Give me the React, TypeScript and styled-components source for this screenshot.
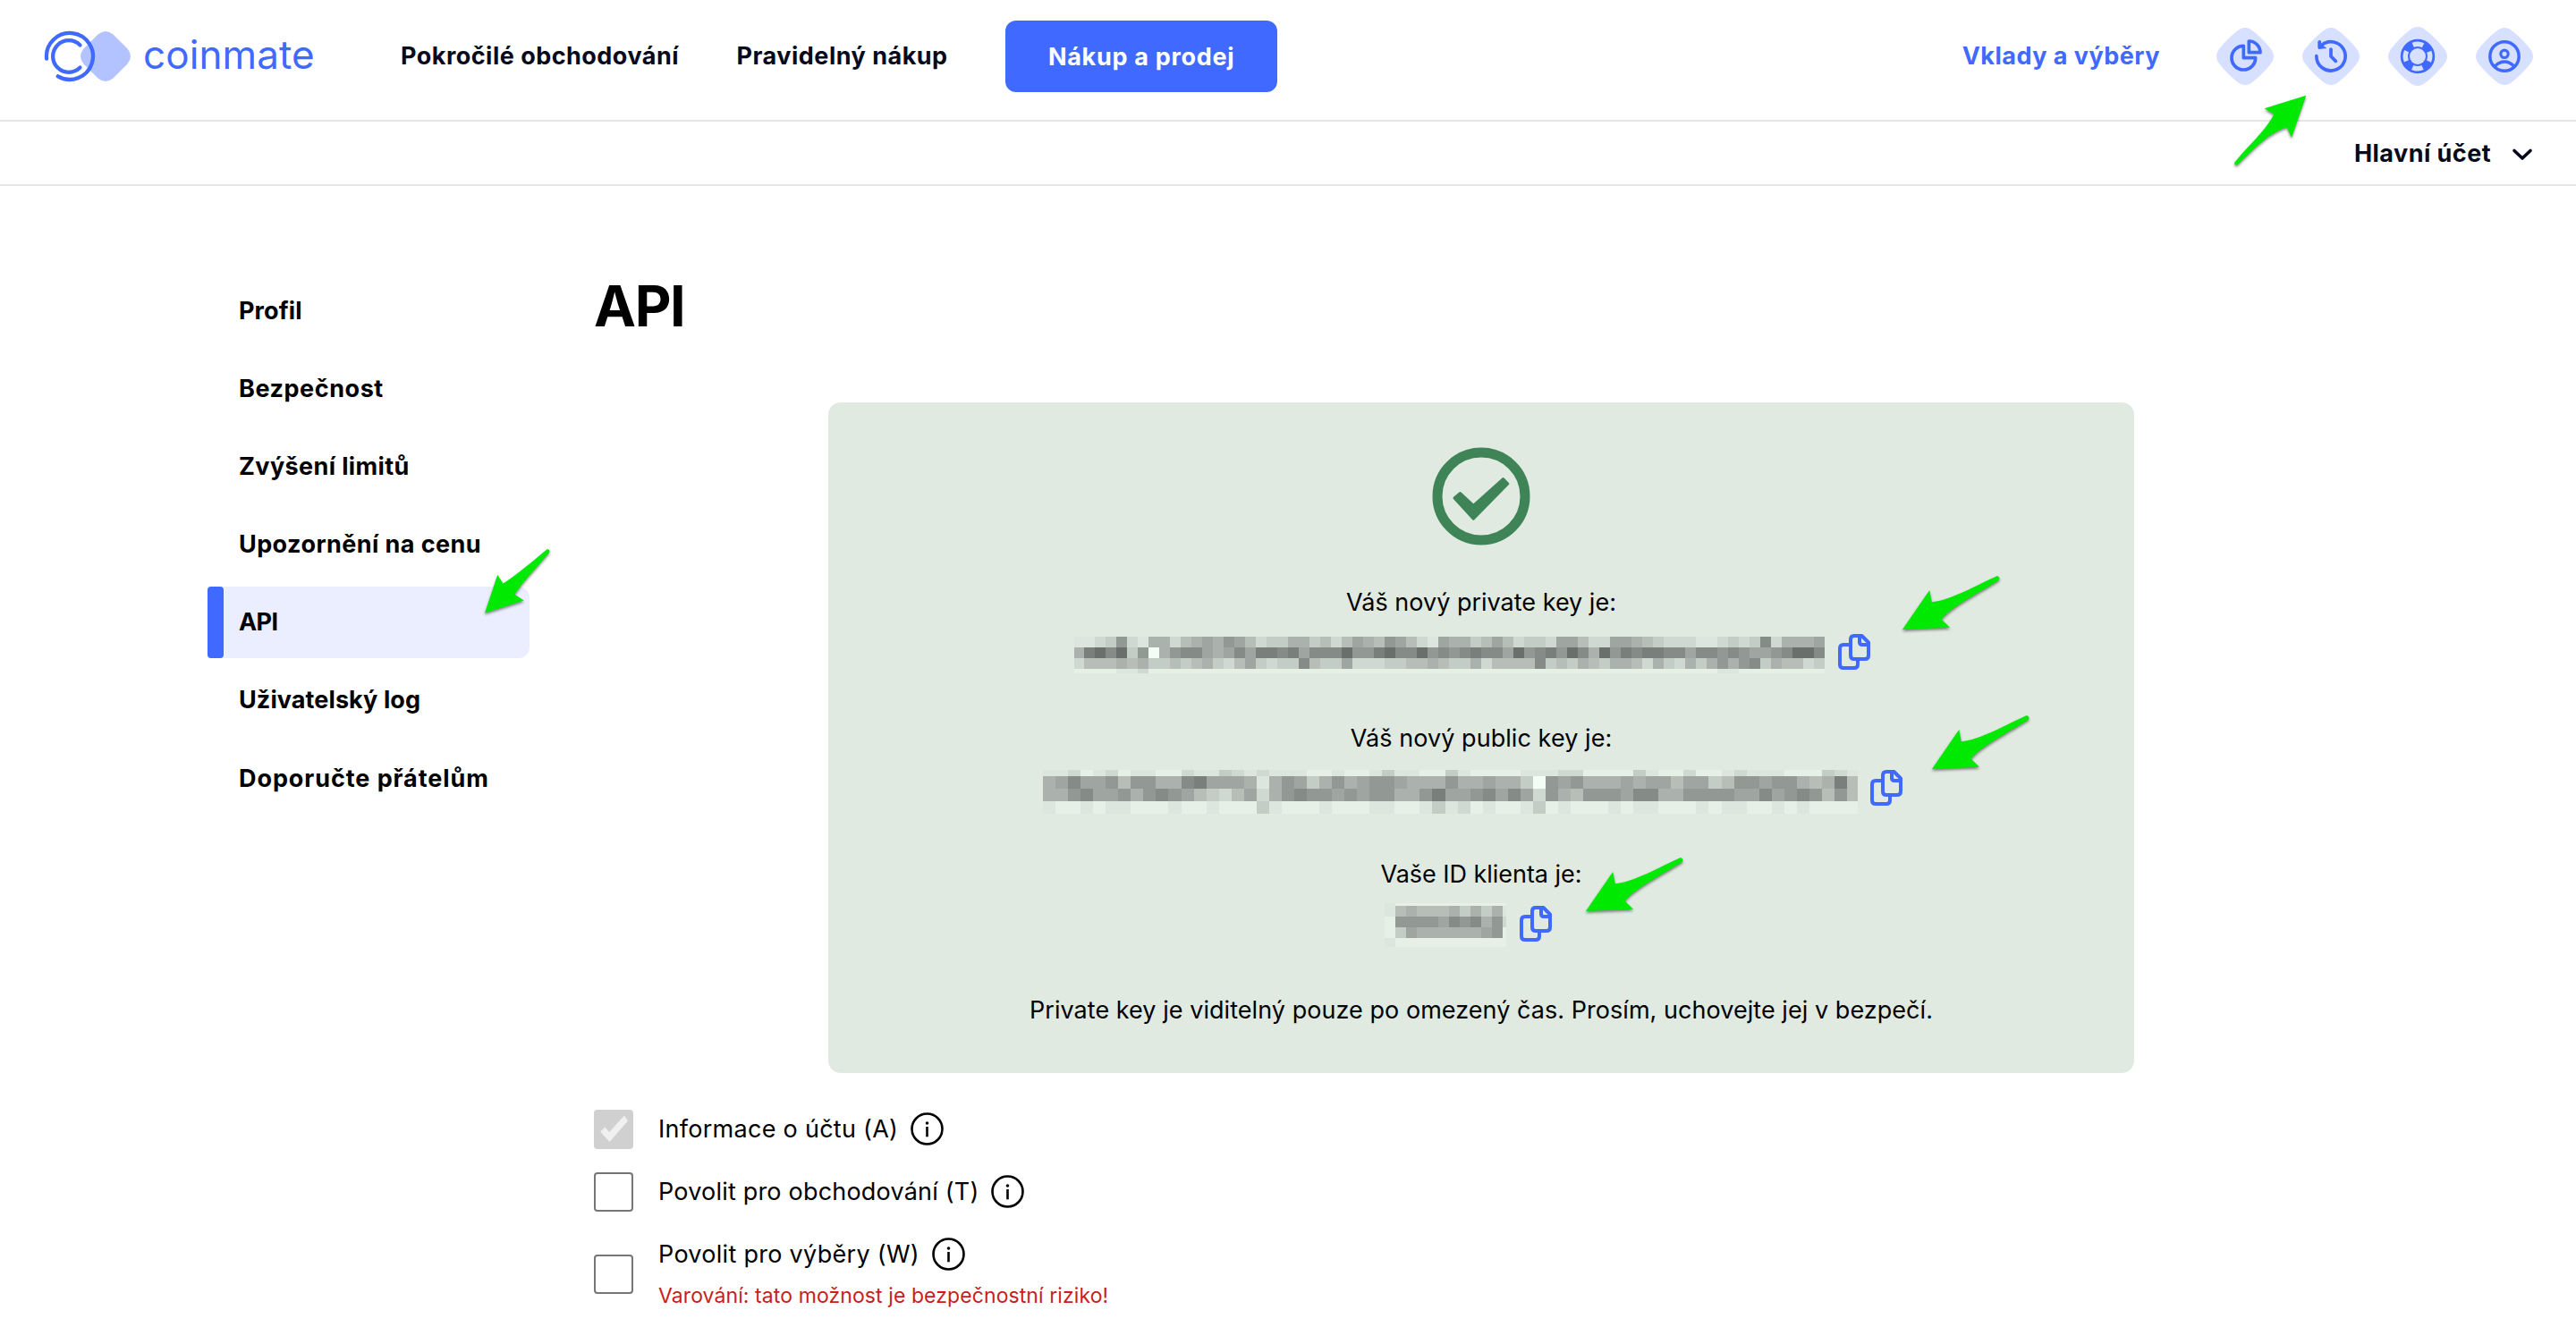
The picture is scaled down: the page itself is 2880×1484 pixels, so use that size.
import React from "react";
import styled, { createGlobalStyle } from "styled-components";

const BLUE = "#3f69ff";
const PALE = "#d8e0ff";
const INK = "#060a1c";

const GlobalStyle = createGlobalStyle`
  * { box-sizing: border-box; }
  html, body { margin: 0; padding: 0; background: #fff; }
  body {
    font-family: Inter, "Liberation Sans", sans-serif;
    font-size: 27px;
    color: #000;
  }
`;

const Page = styled.div`
  position: relative;
  width: 2880px;
  height: 1484px;
  overflow: hidden;
  background: #fff;
`;

/* ---------- header ---------- */

const Header = styled.header`
  display: flex;
  align-items: center;
  height: 136px;
  padding: 0 48px 8px;
  border-bottom: 2px solid #e6e6e6;
`;

const Logo = styled.a`
  display: flex;
  align-items: center;
  gap: 14px;
  width: 400px;
  color: ${BLUE};
`;

const LogoName = styled.span`
  padding-bottom: 5px;
  font-size: 44px;
  font-weight: 400;
  line-height: 56px;
  letter-spacing: 0.1px;
`;

const Nav = styled.nav`
  display: flex;
  flex: 1;
  align-items: center;
  gap: 64.5px;
`;

const NavLink = styled.a<{ $track: number; $accent?: boolean }>`
  color: ${(p) => (p.$accent ? BLUE : INK)};
  font-weight: 700;
  line-height: 40px;
  white-space: nowrap;
  letter-spacing: ${(p) => p.$track}px;
`;

const TradeButton = styled.button`
  width: 304px;
  height: 80px;
  padding: 0;
  border: 0;
  border-radius: 12px;
  background: ${BLUE};
  color: #fff;
  font: inherit;
  font-weight: 700;
  letter-spacing: 0.69px;
`;

const Actions = styled.div`
  display: flex;
  align-items: center;
  gap: 32px;
  margin-left: 63px;
`;

const AccountBar = styled.div`
  display: flex;
  align-items: center;
  justify-content: flex-end;
  gap: 23px;
  height: 72px;
  padding: 2px 48px 0;
  border-bottom: 2px solid #e6e6e6;
`;

/* ---------- body ---------- */

const Main = styled.main`
  display: flex;
  gap: 72px;
  padding-left: 232px;
`;

const Sidebar = styled.aside`
  display: flex;
  flex-direction: column;
  flex: none;
  gap: 7.2px;
  width: 360px;
  padding-top: 99px;
`;

const SideItem = styled.a<{ $active?: boolean; $track: number }>`
  display: flex;
  align-items: center;
  gap: 17px;
  height: 80px;
  border-radius: 4px 12px 12px 4px;
  background: ${(p) => (p.$active ? "#ebeeff" : "transparent")};
  font-weight: 700;
  letter-spacing: ${(p) => p.$track}px;

  &::before {
    content: "";
    width: 18px;
    height: 80px;
    border-radius: 4px;
    background: ${(p) => (p.$active ? BLUE : "transparent")};
  }
`;

const Content = styled.section`
  flex: none;
  width: 1984px;
  padding-top: 94px;
`;

const Title = styled.h1`
  margin: 0 0 67px;
  font-size: 63px;
  font-weight: 700;
  line-height: 81px;
  letter-spacing: -1.4px;
`;

const SuccessPanel = styled.div`
  display: flex;
  flex-direction: column;
  align-items: center;
  width: 1460px;
  height: 750px;
  margin: 0 auto;
  padding-top: 50px;
  border-radius: 14px;
  background: #e0eae1;
`;

const KeyList = styled.div`
  display: flex;
  flex-direction: column;
  margin-top: 44px;
`;

const KeyBlock = styled.div`
  display: flex;
  flex-direction: column;
  align-items: center;
  gap: 11px;
  height: 152px;
`;

const PanelText = styled.p<{ $track?: number }>`
  margin: 0;
  line-height: 40px;
  white-space: nowrap;
  letter-spacing: ${(p) => p.$track ?? 0}px;
`;

const KeyValue = styled.div<{ $gap: number; $shift: number }>`
  display: flex;
  align-items: flex-start;
  gap: ${(p) => p.$gap}px;
  height: 48px;
  margin-left: ${(p) => p.$shift}px;
`;

const Mosaic = styled.div<{ $top: number; $cols: string; $rows: string }>`
  display: grid;
  grid-template-columns: ${(p) => p.$cols};
  grid-template-rows: ${(p) => p.$rows};
  margin-top: ${(p) => p.$top}px;
`;

const Tile = styled.i<{ $tone: string }>`
  background: ${(p) => p.$tone};
`;

const CopyButton = styled.span`
  display: flex;
  margin-top: 4px;
`;

const Options = styled.div`
  display: flex;
  flex-direction: column;
  gap: 26px;
  margin-top: 41px;
`;

const Option = styled.label`
  display: flex;
  align-items: center;
  gap: 28px;
`;

const OptionText = styled.span`
  display: flex;
  flex-direction: column;
`;

const OptionLine = styled.span<{ $track: number }>`
  display: flex;
  align-items: center;
  gap: 14px;
  height: 44px;
  padding-bottom: 2px;
  letter-spacing: ${(p) => p.$track}px;
`;

const OptionWarning = styled.span`
  padding-top: 4px;
  color: #c81e1e;
  font-size: 23px;
  line-height: 40px;
  letter-spacing: 0.09px;
`;

const Checkbox = styled.span<{ $locked?: boolean }>`
  display: flex;
  width: 44px;
  height: 44px;
  border: ${(p) => (p.$locked ? "0" : "2px solid #767676")};
  border-radius: 4px;
  background: ${(p) => (p.$locked ? "#d0d0d0" : "#fff")};
`;

const ArrowMark = styled.svg<{ $x: number; $y: number }>`
  position: absolute;
  left: ${(p) => p.$x}px;
  top: ${(p) => p.$y}px;
  overflow: visible;
  filter: drop-shadow(0 2px 1.5px rgba(0, 0, 0, 0.45));
`;

/* ---------- icons ---------- */

const LogoMark = () => (
  <svg width="98" height="60" viewBox="48 33 98 60" fill="none">
    <path d="M109.5 38.5Q118 31.5 126.5 38.5L142.5 54.5Q149.5 63 142.5 71.5L126.5 87.5Q118 94.5 109.5 87.5L93.5 71.5Q86.5 63 93.5 54.5Z" fill="#b3c3ff" />
    <g stroke={BLUE} strokeWidth="4.3" strokeLinecap="round">
      <path d="M52.1 65.5A26 26 0 1 1 64.8 85.3" />
      <path d="M89.5 50.4A17.8 17.8 0 1 0 89.5 75.6" />
    </g>
  </svg>
);

const Diamond = ({ size = 64, children }: { size?: number; children: React.ReactNode }) => (
  <svg width={size} height={size} viewBox="-96 -96 192 192" fill="none">
    <path d="M-29 -83Q0 -109 29 -83C50 -66 66 -50 83 -29Q109 0 83 29C66 50 50 66 29 83Q0 109 -29 83C-50 66 -66 50 -83 29Q-109 0 -83 -29C-66 -50 -50 -66 -29 -83Z" fill={PALE} />
    {children}
  </svg>
);

const PieIcon = () => (
  <Diamond>
    <g stroke={BLUE} strokeWidth="11" strokeLinejoin="round">
      <path d="M-5 -35V5H35A40 40 0 1 1 -5 -35Z" />
      <path d="M13 -51V-13H51A38 38 0 0 0 13 -51Z" />
    </g>
  </Diamond>
);

const HistoryIcon = () => (
  <Diamond>
    <g stroke={BLUE} strokeWidth="11" strokeLinecap="round" strokeLinejoin="round">
      <path d="M-48.5 -1A48.5 48.5 0 1 0 -32 -37" />
      <path d="M0 -24V0L16 16" />
    </g>
    <path d="M-44 -50Q-38 -58 -33 -51V-42L-14 -27L-40 -24Q-44 -25 -44 -29Z" fill={BLUE} />
  </Diamond>
);

const HelpIcon = () => (
  <Diamond size={66}>
    <circle r="56" fill={BLUE} />
    <circle r="40" stroke={PALE} strokeWidth="16" strokeDasharray="34 28.83" strokeDashoffset="17" />
    <circle r="26" fill={PALE} />
  </Diamond>
);

const UserIcon = () => (
  <Diamond>
    <g stroke={BLUE} strokeWidth="10.5">
      <circle r="48.5" />
      <circle cy="-8" r="12.5" strokeWidth="9.5" />
      <path d="M-33 34Q-18 18 0 18T33 34" />
    </g>
  </Diamond>
);

const ChevronIcon = () => (
  <svg width="24" height="12" viewBox="0 2 24 12" fill="none" overflow="visible">
    <path d="M3 4.5L12 13L21 4.5" stroke={INK} strokeWidth="3.6" strokeLinecap="round" strokeLinejoin="round" />
  </svg>
);

const SuccessIcon = () => (
  <svg width="110" height="110" viewBox="0 0 110 110" fill="none">
    <circle cx="55" cy="55" r="49" stroke="#3e8457" strokeWidth="11" />
    <path
      d="M25 57L31.6 51.5L46.3 65.3L79.5 35.5L84.8 41L46.3 80.2Z"
      fill="#3e8457"
      stroke="#3e8457"
      strokeWidth="3"
      strokeLinejoin="round"
    />
  </svg>
);

const CopyIcon = () => (
  <svg width="36" height="40" viewBox="0 0 36 40" fill="none" stroke={BLUE} strokeWidth="4" strokeLinejoin="round">
    <path d="M14 12H6Q2 12 2 16V34Q2 38 6 38H18Q22 38 22 34V29" />
    <path d="M18 2H26.5L34 9.5V24Q34 28 30 28H18Q14 28 14 24V6Q14 2 18 2Z" />
    <path d="M24 3V9Q24 12 27 12H33" />
  </svg>
);

const InfoIcon = () => (
  <svg width="37" height="37" viewBox="-18.5 -18.5 37 37" fill="none">
    <circle r="17" stroke="#000" strokeWidth="2.6" />
    <circle cy="-6.5" r="1.8" fill="#000" />
    <path d="M0 -2.5V8.8" stroke="#000" strokeWidth="2.6" />
  </svg>
);

const TickIcon = () => (
  <svg width="44" height="44" viewBox="0 0 44 44">
    <path d="M7.2 24.5L12.5 19.5L17.2 25L34 6.5L38 12.5L17.5 36Z" fill="#f0f0f0" />
  </svg>
);

const SHORT_ARROW = "M0 44Q15 22 30.3 0L32.7 13.3C52 12 84 -6 106 -16Q109.5 -14.5 108 -11.5C84 4 54 19 43.7 32.7L53 41.7Z";

const Arrow = ({ x, y, d = SHORT_ARROW }: { x: number; y: number; d?: string }) => (
  <ArrowMark $x={x} $y={y} width="110" height="80">
    <path d={d} fill="#00e900" />
  </ArrowMark>
);

/* ---------- redacted values ---------- */

/* Digits run from the panel colour (0) to the darkest tile (9); w and W are lighter than the panel. */
const TONES: Record<string, string> = {
  W: "#f3fdf5", w: "#e6f0e7", "0": "#dde6de", "1": "#d0d9d1", "2": "#c4cdc5", "3": "#b6beb7",
  "4": "#abb1ac", "5": "#9fa5a0", "6": "#929893", "7": "#858b86", "8": "#797f7a", "9": "#696f6a",
};

type Redaction = { top: number; cols: string; rows: string; map: string[] };

const PRIVATE_KEY: Redaction = {
  top: 7,
  cols: "11px repeat(69, 12px)",
  rows: "12px 12px 12px 5px",
  map: [
    "0012610441345465312244231354365310544235312215531155432111001212714445",
    "4897926W46775457588785777966897796767877596786974968788775776765567997",
    "1333434223234213521227322511122334322413333723243244314214246467243312",
    "wwww001wwwwwwwwwwwwwwwwwwwwwwwwwwwwwwwwwwwwwwwwwwwwwwwwwwwww00wwwwwwwww",
  ],
};

const PUBLIC_KEY: Redaction = {
  top: 4,
  cols: "repeat(64, 14.05px) 12px",
  rows: "7px 14px 14px 14px",
  map: [
    "001w01w00ww1002101000ww0ww0200ww20wwww00011wwww20ww1ww01000www210",
    "457556366447855540465246456654446445442W6564445455355236656643483",
    "44675564676532135146766565664468556757516436665774466665575676363",
    "0ww0w00www0ww0www20www0www00ww0201w0ww02w0www0w00www0w00ww0w0wwww",
  ],
};

const CLIENT_ID: Redaction = {
  top: 1,
  cols: "12px repeat(10, 12px) 4px",
  rows: "3px 12px 12px 12px 10px",
  map: ["0wwwwwwwwwww", "034333424240", "w66665767461", "w2544444456w", "0wwwwwwwwwww"],
};

const Redacted = ({ top, cols, rows, map }: Redaction) => (
  <Mosaic $top={top} $cols={cols} $rows={rows}>
    {map.join("").split("").map((c, i) => (
      <Tile key={i} $tone={TONES[c]} />
    ))}
  </Mosaic>
);

const KEYS = [
  { label: "Váš nový private key je:", track: 0, value: PRIVATE_KEY, gap: 15, shift: -20 },
  { label: "Váš nový public key je:", track: 0.06, value: PUBLIC_KEY, gap: 14, shift: -19 },
  { label: "Vaše ID klienta je:", track: -0.04, value: CLIENT_ID, gap: 15, shift: -29 },
];

const SIDE_ITEMS = [
  { text: "Profil", track: 0.1 },
  { text: "Bezpečnost", track: 0.55 },
  { text: "Zvýšení limitů", track: 0.38 },
  { text: "Upozornění na cenu", track: 0.42 },
  { text: "API", track: -0.6, active: true },
  { text: "Uživatelský log", track: 0.09 },
  { text: "Doporučte přátelům", track: 0.92 },
];

const OPTIONS = [
  { text: "Informace o účtu (A)", track: 0.28, locked: true },
  { text: "Povolit pro obchodování (T)", track: 0.2 },
  { text: "Povolit pro výběry (W)", track: 0.29, warning: "Varování: tato možnost je bezpečnostní riziko!" },
];

export default function App() {
  return (
    <Page>
      <GlobalStyle />
      <Header>
        <Logo>
          <LogoMark />
          <LogoName>coinmate</LogoName>
        </Logo>
        <Nav>
          <NavLink $track={0.475}>Pokročilé obchodování</NavLink>
          <NavLink $track={0.49}>Pravidelný nákup</NavLink>
          <TradeButton>Nákup a prodej</TradeButton>
        </Nav>
        <NavLink $track={0.48} $accent>Vklady a výběry</NavLink>
        <Actions>
          <PieIcon />
          <HistoryIcon />
          <HelpIcon />
          <UserIcon />
        </Actions>
      </Header>
      <AccountBar>
        <NavLink $track={0.45}>Hlavní účet</NavLink>
        <ChevronIcon />
      </AccountBar>
      <Main>
        <Sidebar>
          {SIDE_ITEMS.map((item) => (
            <SideItem key={item.text} $track={item.track} $active={item.active}>
              {item.text}
            </SideItem>
          ))}
        </Sidebar>
        <Content>
          <Title>API</Title>
          <SuccessPanel>
            <SuccessIcon />
            <KeyList>
              {KEYS.map((k) => (
                <KeyBlock key={k.label}>
                  <PanelText $track={k.track}>{k.label}</PanelText>
                  <KeyValue $gap={k.gap} $shift={k.shift}>
                    <Redacted {...k.value} />
                    <CopyButton>
                      <CopyIcon />
                    </CopyButton>
                  </KeyValue>
                </KeyBlock>
              ))}
            </KeyList>
            <PanelText $track={0.045}>
              Private key je viditelný pouze po omezený čas. Prosím, uchovejte jej v bezpečí.
            </PanelText>
          </SuccessPanel>
          <Options>
            {OPTIONS.map((o) => (
              <Option key={o.text}>
                <Checkbox $locked={o.locked}>{o.locked && <TickIcon />}</Checkbox>
                <OptionText>
                  <OptionLine $track={o.track}>
                    {o.text}
                    <InfoIcon />
                  </OptionLine>
                  {o.warning && <OptionWarning>{o.warning}</OptionWarning>}
                </OptionText>
              </Option>
            ))}
          </Options>
        </Content>
      </Main>
      <Arrow
        x={2498}
        y={106}
        d="M80.3 0.7L33.7 15.3L44.3 21.7C34 42 14 58 0 76Q0.5 80 4 78C22 60 40 42 58.7 36.3L64 47.7Z"
      />
      <Arrow
        x={542}
        y={613}
        d="M0 72.4L14.3 29.7L20.4 39.6C36 30 54 14 70 1Q73.5 1.5 72 5C58 22 42 38 33.5 51.8L43.7 58.6Z"
      />
      <Arrow x={2126.5} y={659.5} />
      <Arrow x={2160} y={816} />
      <Arrow x={1773.3} y={975} />
    </Page>
  );
}
